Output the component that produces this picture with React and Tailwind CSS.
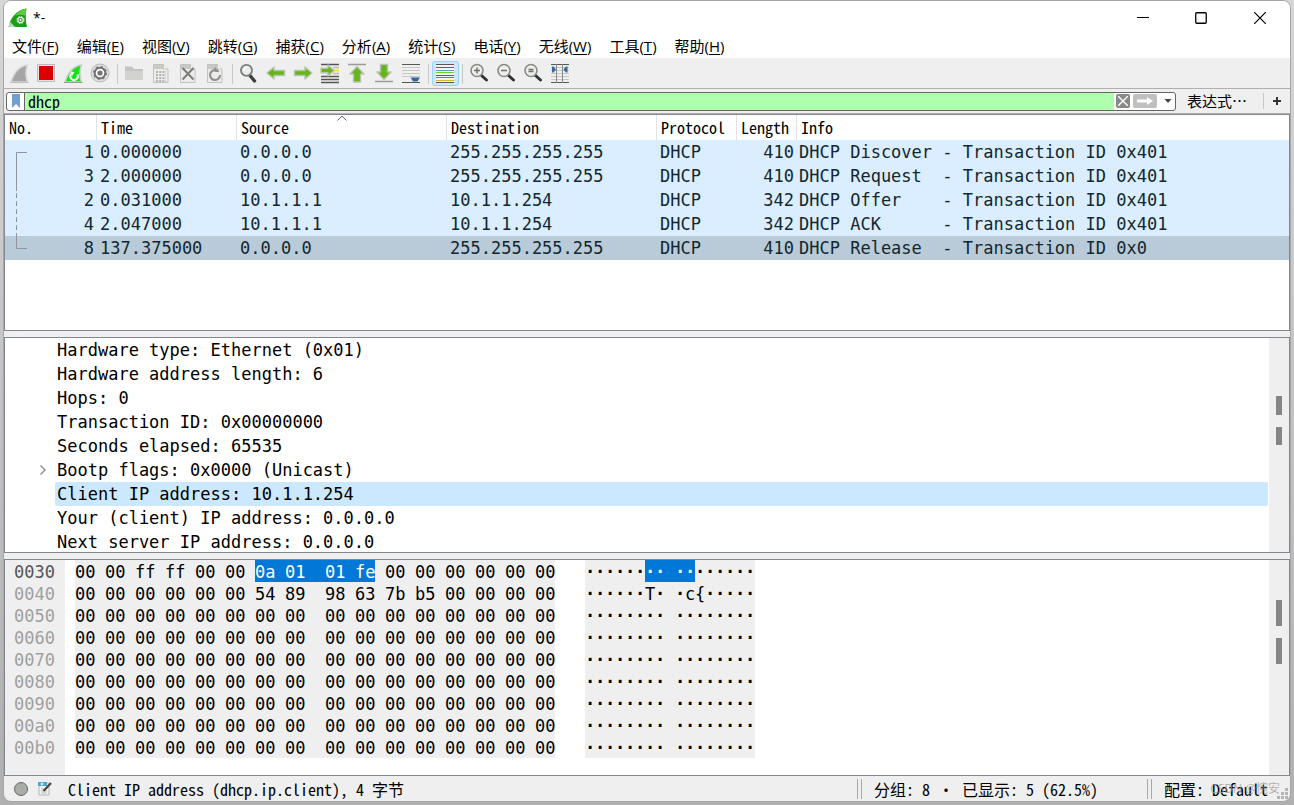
import React, { useState } from 'react';

const UI = 'font-[Noto_Sans_Mono_CJK_SC,Liberation_Mono,Noto_Sans_CJK_SC,monospace]';
const MONO = 'font-[DejaVu_Sans_Mono,monospace]';

const menus = [
    ['文件', 'F'], ['编辑', 'E'], ['视图', 'V'], ['跳转', 'G'], ['捕获', 'C'], ['分析', 'A'],
    ['统计', 'S'], ['电话', 'Y'], ['无线', 'W'], ['工具', 'T'], ['帮助', 'H'],
];

const packets = [
    { no: 1, time: '0.000000', src: '0.0.0.0', dst: '255.255.255.255', len: 410, info: 'DHCP Discover - Transaction ID 0x401' },
    { no: 3, time: '2.000000', src: '0.0.0.0', dst: '255.255.255.255', len: 410, info: 'DHCP Request  - Transaction ID 0x401' },
    { no: 2, time: '0.031000', src: '10.1.1.1', dst: '10.1.1.254', len: 342, info: 'DHCP Offer    - Transaction ID 0x401' },
    { no: 4, time: '2.047000', src: '10.1.1.1', dst: '10.1.1.254', len: 342, info: 'DHCP ACK      - Transaction ID 0x401' },
    { no: 8, time: '137.375000', src: '0.0.0.0', dst: '255.255.255.255', len: 410, info: 'DHCP Release  - Transaction ID 0x0' },
];

const fields = [
    { text: 'Hardware type: Ethernet (0x01)' },
    { text: 'Hardware address length: 6' },
    { text: 'Hops: 0' },
    { text: 'Transaction ID: 0x00000000' },
    { text: 'Seconds elapsed: 65535' },
    { text: 'Bootp flags: 0x0000 (Unicast)', expandable: true },
    { text: 'Client IP address: 10.1.1.254', selected: true },
    { text: 'Your (client) IP address: 0.0.0.0' },
    { text: 'Next server IP address: 0.0.0.0' },
];

const ZERO = '00 00 00 00 00 00 00 00 00 00 00 00 00 00 00 00';
const dump = [
    { offset: '0030', bytes: '00 00 ff ff 00 00 0a 01 01 fe 00 00 00 00 00 00', ascii: '················', sel: [6, 9] },
    { offset: '0040', bytes: '00 00 00 00 00 00 54 89 98 63 7b b5 00 00 00 00', ascii: '······T··c{·····' },
    { offset: '0050', bytes: ZERO, ascii: '················' },
    { offset: '0060', bytes: ZERO, ascii: '················' },
    { offset: '0070', bytes: ZERO, ascii: '················' },
    { offset: '0080', bytes: ZERO, ascii: '················' },
    { offset: '0090', bytes: ZERO, ascii: '················' },
    { offset: '00a0', bytes: ZERO, ascii: '················' },
    { offset: '00b0', bytes: ZERO, ascii: '················' },
];

const Svg = ({ children }) => (
    <svg viewBox="1 1 19 19" className="size-[19px] overflow-visible" fill="none" aria-hidden="true">{children}</svg>
);

const Sheet = ({ children }) => (
    <Svg>
        <path d="M2.500 1.500h10l4.500 4.500v13.500H2.500z" fill="#ececea" stroke="#c2c2be" />
        <path d="M3 2h9v4H3z" fill="#c9c9c6" />
        <path d="M12.500 1.500V6H17" fill="#f8f8f8" stroke="#c2c2be" />
        {children}
    </Svg>
);

const Lens = ({ children }) => (
    <Svg>
        <path d="m12.500 12.500 5 4.500" stroke="#2e3436" strokeWidth="3" strokeLinecap="round" />
        <circle cx="8" cy="7.500" r="6" fill="#eeeeec" stroke="#888a85" strokeWidth="1.600" />
        {children}
    </Svg>
);

const greenArrow = { fill: '#65b51b', stroke: '#b9c4b0', strokeWidth: 1.4, strokeLinejoin: 'round' };

const icons = {
    start: (
        <Svg>
            <path d="M2 19C5 9.500 10 3 18.500 2 16.500 7.500 16.500 13.500 18.500 19z" fill="#a6a6a6" stroke="#d9d9d9" strokeWidth="1.600" />
            <path d="M1 19.500h18.500" stroke="#bdbdbd" />
        </Svg>
    ),
    stop: (
        <Svg>
            <path d="M1.500 1.500h17v17h-17z" fill="#e4e4e4" stroke="#bcbcbc" />
            <path d="M3 3h14v14H3z" fill="#dd0000" />
        </Svg>
    ),
    restart: (
        <Svg>
            <path d="M2 19C5 9.500 10 3 18.500 2 16.500 7.500 16.500 13.500 18.500 19z" fill="#19e01c" stroke="#c3d6c3" strokeWidth="1.500" />
            <path d="M8 11a3.800 3.800 0 1 0 6.500 .5" stroke="#fff" strokeWidth="2" />
            <path d="m7 8.500 4.500 .5-2.500 4z" fill="#fff" />
            <path d="M1 19.500h18.500" stroke="#999" />
        </Svg>
    ),
    options: (
        <Svg>
            <circle cx="10" cy="10" r="9" fill="#dedede" stroke="#b8b8b8" />
            <circle cx="10" cy="10" r="5.300" fill="#fff" stroke="#757575" strokeWidth="2" />
            <circle cx="10" cy="10" r="6.300" stroke="#757575" strokeWidth="1.500" strokeDasharray="2 2.950" />
            <circle cx="10" cy="10" r="2.600" fill="#757575" />
        </Svg>
    ),
    open: (
        <Svg>
            <path d="M1 3.500h7l2 2.500h9v11H1z" fill="#c4c4c2" />
            <path d="M1 8h18v9H1z" fill="#d2d2d0" />
        </Svg>
    ),
    save: (
        <Sheet>
            <path d="M5 9h10M5 12h10M5 15h10M5 18h10" stroke="#b4b4b4" strokeWidth="1.800" strokeDasharray="2 1.200" />
        </Sheet>
    ),
    close: (
        <Sheet>
            <path d="m4.500 5 11 11.500m0-11.500-11 11.500" stroke="#7b7d79" strokeWidth="2" />
        </Sheet>
    ),
    reload: (
        <Sheet>
            <path d="M13 8A5 5 0 1 0 15 12" stroke="#909290" strokeWidth="2.200" />
            <path d="M9.500 3.500V9h5z" fill="#909290" />
        </Sheet>
    ),
    find: (
        <Svg>
            <path d="m11 12.500 4.500 5.500" stroke="#3b3f40" strokeWidth="3.400" strokeLinecap="round" />
            <circle cx="7.500" cy="7.300" r="5.500" fill="#e9edf0" stroke="#7b7d79" strokeWidth="1.800" />
            <path d="M5 7A3 3 0 0 1 7.500 4.500" stroke="#fff" strokeWidth="1.500" />
        </Svg>
    ),
    back: <Svg><path d="M1 10l7-6v3.500h10.500v5H8V16z" {...greenArrow} /></Svg>,
    forward: <Svg><path d="M19 10l-7-6v3.500H1.500v5H12V16z" {...greenArrow} /></Svg>,
    goto: (
        <Svg>
            <path d="M1 1.500h18M1 13.500h18M1 16.500h18M1 19.500h18" stroke="#555753" strokeWidth="1.300" />
            <path d="M13 4.500h6M13 10.500h6" stroke="#babdb6" strokeWidth="1.300" />
            <path d="M14 7.500h5" stroke="#fce94f" strokeWidth="3" />
            <path d="M14 7.500l-6-5.500v3.200H1v4.600h7V13z" {...greenArrow} />
        </Svg>
    ),
    top: (
        <Svg>
            <path d="M1 1.500h18" stroke="#999b97" strokeWidth="1.600" />
            <path d="M10 3.500 17 11h-3.500v8h-7v-8H3z" {...greenArrow} />
        </Svg>
    ),
    bottom: (
        <Svg>
            <path d="M1 18.500h18" stroke="#999b97" strokeWidth="1.600" />
            <path d="M10 16.500 17 9h-3.500V1.500h-7V9H3z" {...greenArrow} />
        </Svg>
    ),
    autoscroll: (
        <Svg>
            <path d="M1 4.500h18M1 7.500h18M1 10.500h18M1 13.500h18" stroke="#c6c8c3" />
            <path d="M1 1.500h18M1 19.500h18" stroke="#555753" />
            <path d="M9.500 14.500h9.500l-2.500 4h-4.500z" fill="#3465a4" />
        </Svg>
    ),
    colorize: (
        <Svg>
            <path d="M1 1.500h18v18H1z" fill="#eef4f8" />
            <path d="M1 1.500h18M1 19.500h18" stroke="#555753" />
            <path d="M1 4.500h18" stroke="#ef2929" />
            <path d="M1 7.500h18" stroke="#7295c2" />
            <path d="M1 9.500h18" stroke="#73d216" />
            <path d="M1 12.500h18" stroke="#3465a4" />
            <path d="M1 14.500h18" stroke="#8b6a94" />
            <path d="M1 17.500h18" stroke="#d6b429" />
        </Svg>
    ),
    zoomIn: <Lens><path d="M5 7.500h6m-3-3v6" stroke="#6e706c" strokeWidth="1.500" /></Lens>,
    zoomOut: <Lens><path d="M5 7.500h6" stroke="#6e706c" strokeWidth="1.500" /></Lens>,
    zoomReset: <Lens><path d="M5.500 6.500h5M5.500 8.500h5" stroke="#6e706c" strokeWidth="1.500" /></Lens>,
    resize: (
        <Svg>
            <path d="M1 4.500h18M1 7.500h18M1 10.500h18M1 13.500h18M1 16.500h18" stroke="#c6c8c3" />
            <path d="M1 1.500h18M1 19.500h18" stroke="#555753" />
            <path d="M6.500 1v19M12.500 1v19" stroke="#888a85" />
            <path d="M2 3.500h1.500l2.500 3-2.500 3H2zM17.500 3.500H16l-2.500 3 2.500 3h1.500z" fill="#3465a4" />
        </Svg>
    ),
};

const toolbar = [
    ['start', 'stop', 'restart', 'options'],
    ['open', 'save', 'close', 'reload'],
    ['find', 'back', 'forward', 'goto', 'top', 'bottom', 'autoscroll'],
    ['colorize'],
    ['zoomIn', 'zoomOut', 'zoomReset', 'resize'],
];

function TitleBar() {
    return (
        <header className="flex h-[33px] shrink-0 items-center bg-white pl-1">
            <svg viewBox="0 0 20 20" className="size-5" aria-hidden="true">
                <path d="M.5 19C2.500 10 8 2 18.500 .5c-1 6-1 12 .5 18.500z" fill="#1b9e16" />
                <path d="M7 8C10 4 13 1.500 18.500 .5c-.6 3-.8 5-.8 7.500C14 6 10 6.500 7 8z" fill="#5ccb45" />
                <path d="M.5 19c.4-2 1-3.500 1.700-5l5 5z" fill="#b8d8b5" />
                <circle cx="12.500" cy="12" r="2.700" fill="#3f8f3d" stroke="#e4f3e3" strokeWidth="1.200" />
                <circle cx="12.500" cy="12" r="3.600" fill="none" stroke="#e4f3e3" strokeDasharray="1.400 1.430" />
                <circle cx="12.500" cy="12" r="1" fill="#fff" />
            </svg>
            <h1 className="flex-1 pl-[5px] font-[Open_Sans,sans-serif] text-[14px]">*-</h1>
            <button aria-label="Minimize" className="flex h-full w-[58px] items-center justify-center">
                <svg viewBox="0 0 12 12" className="size-3"><path d="M0 5.500h12" stroke="#000" /></svg>
            </button>
            <button aria-label="Maximize" className="flex h-full w-[58px] items-center justify-center">
                <svg viewBox="0 0 12 12" className="size-3"><rect x=".75" y=".75" width="10.500" height="10.500" rx="1" fill="none" stroke="#000" strokeWidth="1.300" /></svg>
            </button>
            <button aria-label="Close" className="flex h-full w-[60px] items-center justify-center">
                <svg viewBox="0 0 12 12" className="size-3"><path d="m0 0 12 12M12 0 0 12" stroke="#000" strokeWidth="1.200" /></svg>
            </button>
        </header>
    );
}

function FilterBar() {
    const [filter, setFilter] = useState('dhcp');
    return (
        <div className={`flex h-[25px] shrink-0 items-center border-b border-[#b0b0b0] pl-0.5 text-base leading-5 ${UI}`}>
            <div className="flex h-[19px] flex-1 items-stretch overflow-hidden rounded-[3px] border border-[#666] bg-white">
                <button aria-label="Bookmarks" className="flex w-[18px] items-center justify-center border-r border-[#666]">
                    <svg viewBox="0 0 8 14" className="h-3.5 w-2"><path d="M0 0h8v14l-4-4-4 4z" fill="#729fcf" /></svg>
                </button>
                <input
                    aria-label="Display filter"
                    value={filter}
                    onChange={(e) => setFilter(e.target.value)}
                    className="min-w-0 flex-1 bg-[#afffaf] pl-[3px] outline-none"
                />
                <div className="flex items-center gap-[3px] pr-[3px] pl-0.5">
                    <button aria-label="Clear" className="flex h-3.5 w-3.5 items-center justify-center rounded-[2px] bg-[#888a85]">
                        <svg viewBox="0 0 10 10" className="size-2.5"><path d="m0 0 10 10M10 0 0 10" stroke="#fff" strokeWidth="1.400" /></svg>
                    </button>
                    <button aria-label="Apply" className="flex h-3.5 w-6 items-center justify-center rounded-[2px] bg-[#c0c0c0]">
                        <svg viewBox="0 0 16 8" className="h-2 w-4"><path d="M0 2.500h10V0l6 4-6 4V5.500H0z" fill="#fff" /></svg>
                    </button>
                    <button aria-label="History" className="flex w-3 items-center justify-end">
                        <svg viewBox="0 0 8 4" className="h-1 w-2"><path d="M.5 0h7L4 4z" fill="#444" /></svg>
                    </button>
                </div>
            </div>
            <button className="ml-[11px] font-[Noto_Sans_CJK_SC,sans-serif] text-[15px]">表达式…</button>
            <span className="ml-4 h-4 w-px bg-[#c8c8c8]" />
            <button aria-label="Add filter" className="flex w-[26px] items-center justify-center">
                <svg viewBox="0 0 8 8" className="size-2"><path d="M4 0v8M0 4h8" stroke="#333" strokeWidth="2" /></svg>
            </button>
        </div>
    );
}

function PacketList() {
    const th = 'border-r border-[#e2e2e2] pl-1 text-left font-normal';
    return (
        <section className="relative min-h-0 flex-1 overflow-hidden border border-[#828790] bg-white">
            <table className="w-full table-fixed border-separate border-spacing-0">
                <colgroup>
                    <col className="w-[92px]" />
                    <col className="w-[140px]" />
                    <col className="w-[210px]" />
                    <col className="w-[210px]" />
                    <col className="w-[80px]" />
                    <col className="w-[60px]" />
                    <col />
                </colgroup>
                <thead className={`text-base leading-[25px] ${UI}`}>
                    <tr>
                        <th className={th}>No.</th>
                        <th className={th}>Time</th>
                        <th className={`relative ${th}`}>
                            Source
                            <svg viewBox="0 0 10 6" className="absolute top-0 left-1/2 h-1.5 w-2.5 -translate-x-1/2"><path d="m.5 5.500 4.500-4.500 4.500 4.500" fill="none" stroke="#666" /></svg>
                        </th>
                        <th className={th}>Destination</th>
                        <th className={th}>Protocol</th>
                        <th className={th}>Length</th>
                        <th className="pl-1 text-left font-normal">Info</th>
                    </tr>
                </thead>
                <tbody className={`text-[17px] leading-6 text-[#12272e] ${MONO}`}>
                    {packets.map((p) => (
                        <tr key={p.no} className={p.no === 8 ? 'bg-[#b9cbd9]' : 'bg-[#daeeff]'}>
                            <td className="pr-[3px] text-right">{p.no}</td>
                            <td className="pl-[3px]">{p.time}</td>
                            <td className="pl-[3px]">{p.src}</td>
                            <td className="pl-[3px]">{p.dst}</td>
                            <td className="pl-[3px]">DHCP</td>
                            <td className="pr-[3px] text-right">{p.len}</td>
                            <td className="pl-0.5 whitespace-pre">{p.info}</td>
                        </tr>
                    ))}
                </tbody>
            </table>
            {/* conversation bracket drawn over the No. column */}
            <svg viewBox="0 0 12 98" className="absolute top-[37px] left-[11px] h-[98px] w-3" fill="none" stroke="#8d969e">
                <path d="M11 .5H.5V39" />
                <path d="M.5 41v44" strokeDasharray="5 3" />
                <path d="M.5 85v11.500H11" />
            </svg>
        </section>
    );
}

const Gutter = ({ children }) => (
    <div className="flex w-5 shrink-0 flex-col items-center bg-[#efefef]">{children}</div>
);

function PacketDetails() {
    return (
        <section className="flex min-h-0 flex-1 overflow-hidden border border-[#828790] bg-white">
            <ul className={`min-w-0 flex-1 pr-px text-[17px] leading-6 ${MONO}`}>
                {fields.map((f) => (
                    <li key={f.text} className="flex h-6">
                        <span className="flex w-[50px] shrink-0 items-center justify-end pr-2">
                            {f.expandable && (
                                <svg viewBox="0 0 8 12" className="h-3 w-2"><path d="m1.500 1.500 4.500 4.500-4.500 4.500" fill="none" stroke="#8c8c8c" strokeWidth="1.400" /></svg>
                            )}
                        </span>
                        <span className={f.selected ? 'flex-1 rounded-[2px] bg-[#cce8ff] pl-0.5' : 'flex-1 pl-0.5'}>{f.text}</span>
                    </li>
                ))}
            </ul>
            <Gutter>
                <span className="mt-[58px] h-[19px] w-1.5 bg-[#858585]" />
                <span className="mt-3 h-[18px] w-1.5 bg-[#858585]" />
            </Gutter>
        </section>
    );
}

function HexRow({ row }) {
    const inSel = (i) => row.sel && i >= row.sel[0] && i <= row.sel[1];
    const last = (i) => row.sel && i === row.sel[1];
    return (
        <div className="flex h-[22px]">
            <div className="flex w-[480px] bg-[#efefef]">
                {row.bytes.split(' ').map((b, i) => (
                    <span key={i} className={i === 7 ? 'w-10 shrink-0' : i === 15 ? 'w-5 shrink-0' : 'w-[30px] shrink-0'}>
                        <span className={inSel(i) ? (last(i) ? 'block h-full w-5 bg-[#0078d7] text-white' : 'block h-full bg-[#0078d7] text-white') : 'block'}>{b}</span>
                    </span>
                ))}
            </div>
            <div className="ml-[30px] flex w-[170px] bg-[#efefef]">
                {[...row.ascii].map((c, i) => (
                    <span key={i} className={`shrink-0 ${c === '·' ? 'font-bold' : ''} ${i === 7 ? 'w-5' : 'w-2.5'} ${inSel(i) ? 'bg-[#0078d7] text-white' : ''}`}>{c}</span>
                ))}
            </div>
        </div>
    );
}

function PacketBytes() {
    return (
        <section className={`flex min-h-0 flex-1 overflow-hidden border border-[#828790] bg-white text-[17px] leading-6 ${MONO}`}>
            <div className="w-[60px] shrink-0 bg-[#efefef] pl-[9px] text-[#9f9f9f]">
                {dump.map((r) => (
                    <div key={r.offset} className={r.sel ? 'h-[22px] text-[#555]' : 'h-[22px]'}>{r.offset}</div>
                ))}
            </div>
            <div className="min-w-0 flex-1 pl-2.5">
                {dump.map((r) => <HexRow key={r.offset} row={r} />)}
            </div>
            <Gutter>
                <span className="mt-10 h-[26px] w-1.5 bg-[#858585]" />
                <span className="mt-3 h-[26px] w-1.5 bg-[#858585]" />
            </Gutter>
        </section>
    );
}

const Grip = () => (
    <span className="flex h-5 w-[5px] shrink-0 border-x border-[#a8a8a8]" />
);

function StatusBar() {
    return (
        <footer className={`relative flex h-[25px] shrink-0 items-center text-base leading-5 ${UI}`}>
            <button aria-label="Expert information" className="ml-2.5 size-3.5 rounded-full border border-[#666] bg-[#aaaca7]" />
            <button aria-label="Capture comment" className="ml-2.5">
                <svg viewBox="0 0 14 14" className="size-3.5" fill="none">
                    <path d="M1 1h10v12H1z" fill="#f4f4f2" stroke="#b5b5b0" />
                    <path d="M0 0h9v4H0z" fill="#4ba3d6" />
                    <path d="M4 .5v3M2.500 2h3" stroke="#fff" />
                    <path d="M3 7h3M3 9h6M3 11h6" stroke="#b8b8b4" />
                    <path d="m5.500 9 7.500-8" stroke="#444" strokeWidth="2.200" />
                </svg>
            </button>
            <span className="min-w-0 flex-1 pl-4 whitespace-pre">Client IP address (dhcp.ip.client), 4 字节</span>
            <Grip />
            <span className="w-[285px] shrink-0 pl-3 whitespace-pre">分组: 8 · 已显示: 5 (62.5%)</span>
            <Grip />
            <button className="w-[138px] shrink-0 pl-3 text-left whitespace-pre">配置: Default</button>
            <span className="absolute right-2.5 bottom-1 font-[Open_Sans,Noto_Sans_CJK_SC,sans-serif] text-xs leading-4 text-[#a0a0a0]/80">CSDN @惋安</span>
            <svg viewBox="0 0 11 11" className="absolute right-0.5 bottom-0.5 size-[11px]" fill="#b5b5b5">
                <path d="M8 0h3v3H8zM4 4h3v3H4zM8 4h3v3H8zM0 8h3v3H0zM4 8h3v3H4zM8 8h3v3H8z" />
            </svg>
        </footer>
    );
}

export default function App() {
    return (
        <div className="flex h-screen bg-linear-to-b from-[#d6d6d6] to-[#b0b0b0] px-[3px] pb-[3px] text-black">
            <main className="flex min-w-0 flex-1 flex-col overflow-hidden rounded-lg border border-[#a6a6a6] bg-[#efefef]">
                <TitleBar />
                <nav className="flex h-[25px] shrink-0 items-center gap-[18px] border-b border-[#efefef] bg-white pl-2 font-[Open_Sans,Noto_Sans_CJK_SC,sans-serif] text-[15px] leading-6">
                    {menus.map(([label, key]) => (
                        <button key={key}>{label}(<u className="underline-offset-2">{key}</u>)</button>
                    ))}
                </nav>
                <div className="flex h-[30px] shrink-0 items-center border-b border-[#b0b0b0] pl-0.5">
                    {toolbar.map((group, g) => (
                        <div key={g} className="flex items-center">
                            {g > 0 && <span className="mx-[3px] h-5 w-px bg-[#c8c8c8]" />}
                            {group.map((name) => (
                                <button
                                    key={name}
                                    aria-label={name}
                                    className={`flex h-[25px] w-[27px] items-center justify-center ${name === 'colorize' ? 'rounded-[3px] border border-[#99d1ff] bg-[#cce8ff]' : ''}`}
                                >
                                    {icons[name]}
                                </button>
                            ))}
                        </div>
                    ))}
                </div>
                <FilterBar />
                <div className="flex min-h-0 flex-1 flex-col gap-1.5">
                    <PacketList />
                    <PacketDetails />
                    <PacketBytes />
                </div>
                <StatusBar />
            </main>
        </div>
    );
}
